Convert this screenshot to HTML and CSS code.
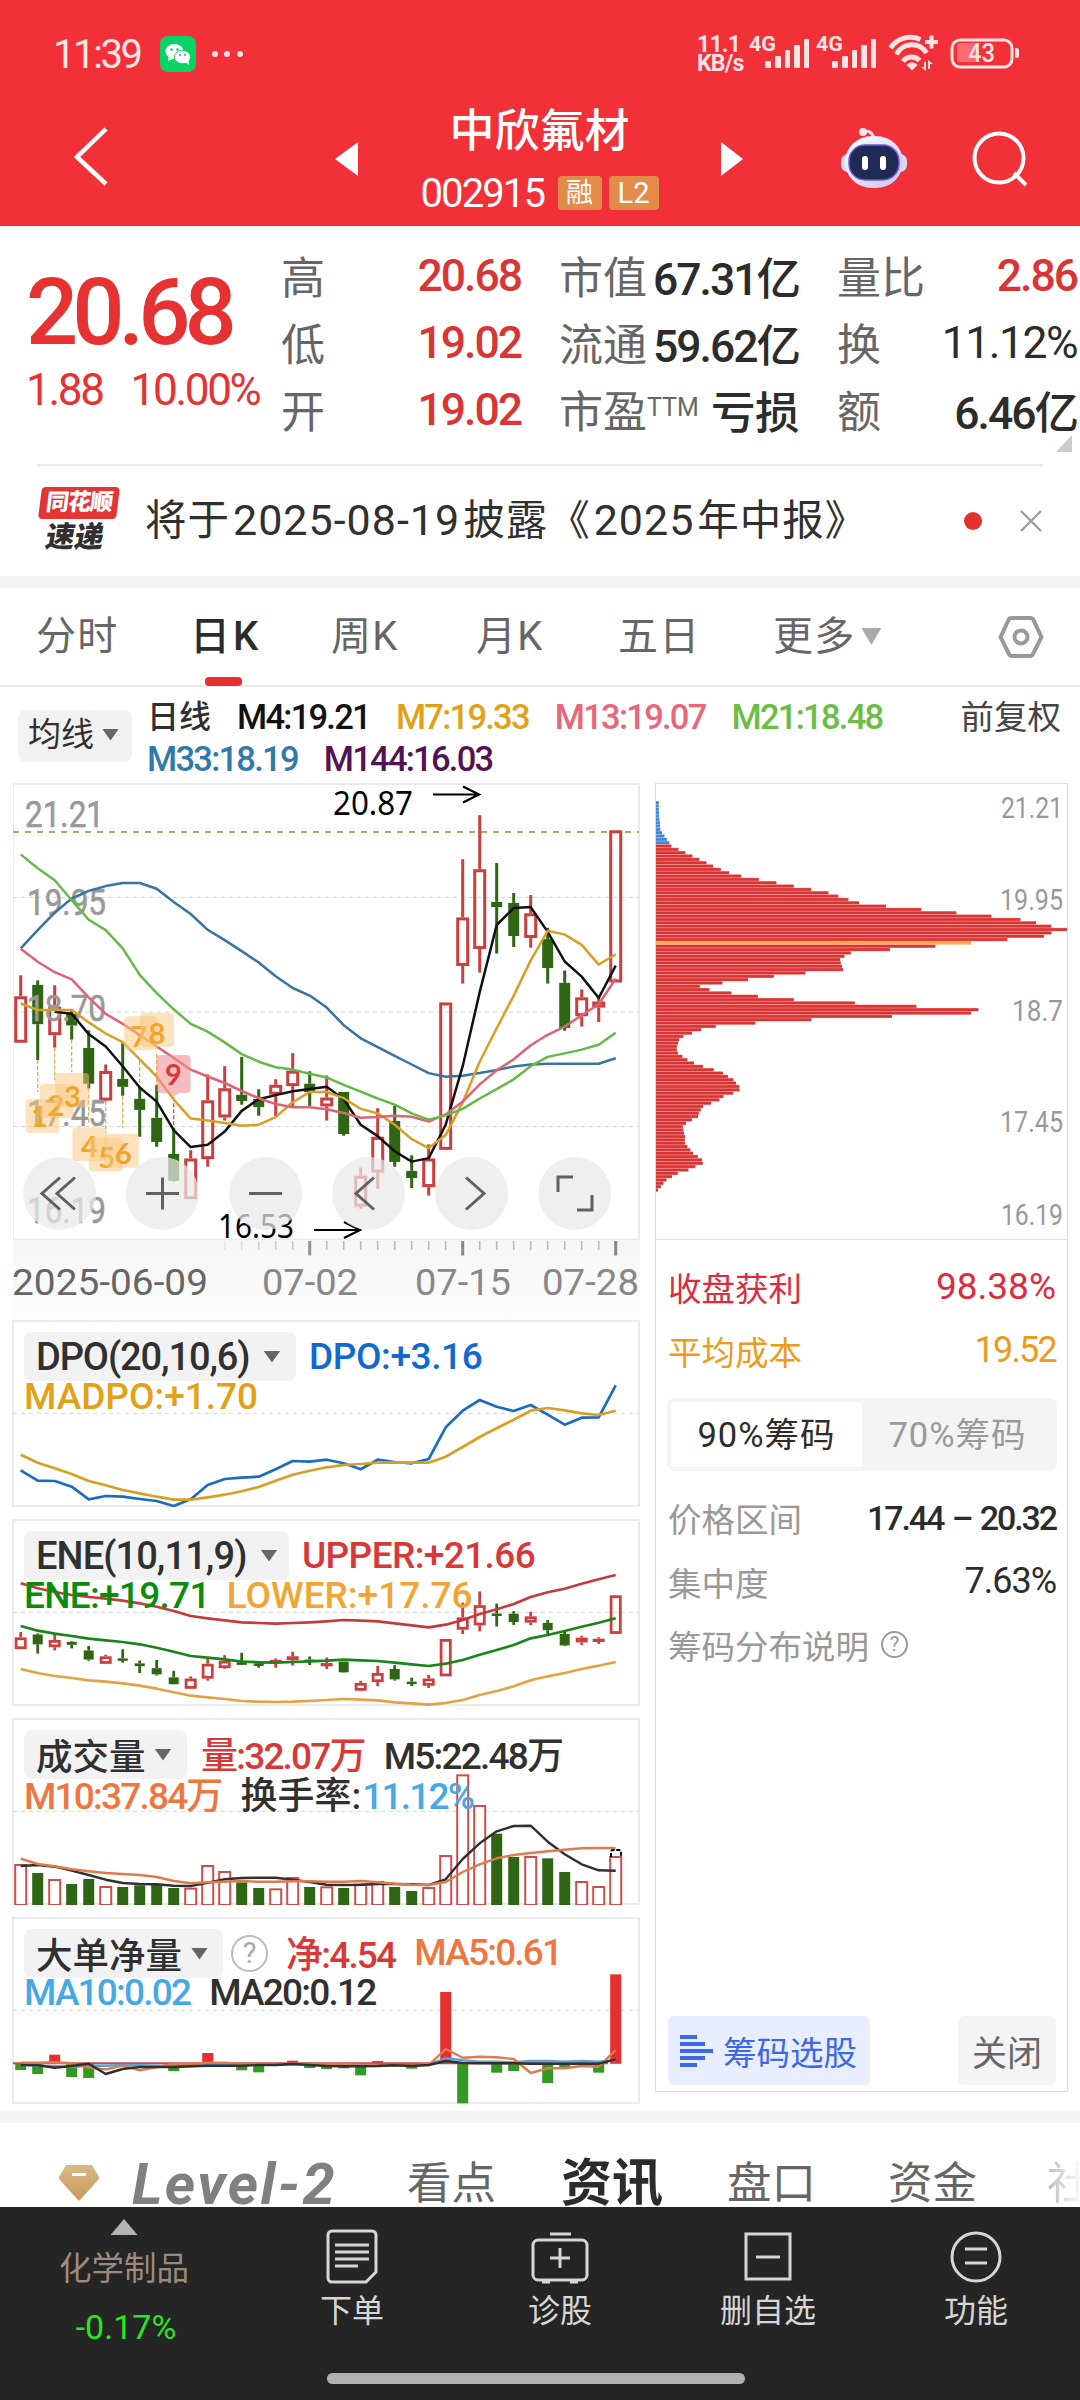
FILE: index.html
```html
<!DOCTYPE html>
<html lang="zh-CN">
<head>
<meta charset="utf-8">
<title>中欣氟材 002915</title>
<link rel="stylesheet" href="styles.css">
</head>
<body>
<div class="app">
<header class="top">
  <div class="status">
    <span class="clock">11:39</span>
    <svg class="wechat" width="36" height="36" viewBox="0 0 36 36"><rect width="36" height="36" rx="8" fill="#08d465"/><ellipse cx="14.500" cy="15.500" rx="9" ry="7.500" fill="#fff"/><path d="M9 20l-1 5 5-2z" fill="#fff"/><ellipse cx="22.500" cy="21" rx="8" ry="6.800" fill="#fff" stroke="#08d465" stroke-width="1"/><path d="M25 26l4 3-.5-5z" fill="#fff"/><g fill="#08d465"><circle cx="11.500" cy="13.500" r="1.300"/><circle cx="17.500" cy="13.500" r="1.300"/><circle cx="20" cy="19" r="1.100"/><circle cx="25" cy="19" r="1.100"/></g></svg>
    <svg class="dots" width="34" height="8" viewBox="0 0 34 8" fill="#ffe0e0"><circle cx="3" cy="4" r="3"/><circle cx="15" cy="4" r="3"/><circle cx="28" cy="4" r="3"/></svg>
    <div class="rate"><span>11.1</span><span>KB/s</span></div>
    <svg class="signals" width="330" height="44" viewBox="745 33 330 44" fill="#ffe3e4">
      <g id="sig"><text x="748" y="52" class="g4" textLength="27" lengthAdjust="spacingAndGlyphs">4G</text><rect x="764" y="62" width="6" height="7" rx="1"/><rect x="774" y="57" width="6" height="12" rx="1"/><rect x="784" y="51" width="5" height="18" rx="1"/><rect x="793" y="46" width="6" height="23" rx="1"/><rect x="803" y="40" width="5" height="29" rx="1"/></g>
      <use href="#sig" x="67"/>
      <g fill="none" stroke="#ffe3e4" stroke-width="5"><path d="M889.500 49a24 24 0 0 1 30-8.500"/><path d="M895.500 55.500a17 17 0 0 1 30-1.500"/><path d="M902 62.500a10.500 10.500 0 0 1 16.500-1"/><path d="M924 43h13M930.500 36.500v13" stroke-width="4"/></g>
      <path d="M905.500 66a7 7 0 0 1 11 0l-5.500 5.500z"/><path d="M920 68h3v-5h2v9zM932 65h-3v5h-2v-9z"/>
      <rect x="951" y="41" width="60" height="27" rx="8" fill="none" stroke="#ffe3e4" stroke-width="3"/><path d="M959 44h17v19h-17a3 3 0 0 1-3-3v-13a3 3 0 0 1 3-3z" fill="#ff6b70"/><path d="M1014 49h2q2 0 2 2v6q0 2-2 2h-2z"/><text x="967" y="63" class="batt" textLength="27" lengthAdjust="spacingAndGlyphs">43</text>
    </svg>
  </div>
  <div class="titlebar">
    <svg class="back" width="40" height="64" viewBox="0 0 40 64" fill="none" stroke="#fff" stroke-width="4.500"><path d="M33 4L4 32l29 27"/></svg>
    <svg class="prev" width="24" height="36" viewBox="0 0 24 36"><path d="M23 1v34L0 18z" fill="#fff"/></svg>
    <div class="stock">
      <h1>中欣氟材</h1>
      <div class="code"><span class="din">002915</span><i class="tag">融</i><i class="tag l2">L2</i></div>
    </div>
    <svg class="next" width="24" height="36" viewBox="0 0 24 36"><path d="M1 1v34l22-17z" fill="#fff"/></svg>
    <svg class="robot" width="70" height="66" viewBox="0 0 70 66"><defs><linearGradient id="rb" x1="0" y1="0" x2="1" y2="1"><stop offset="0" stop-color="#fff"/><stop offset="1" stop-color="#c9c4f5"/></linearGradient></defs><path d="M24 6q9-1 11 7" fill="none" stroke="#ffd9e4" stroke-width="3"/><circle cx="24" cy="7" r="4" fill="#ffe6ee"/><rect x="2" y="29" width="66" height="18" rx="7" fill="#d9d8f8"/><rect x="6" y="11" width="58" height="52" rx="27" fill="url(#rb)"/><rect x="10" y="20" width="50" height="35" rx="16" fill="#1f2b55" stroke="#7a58dd" stroke-width="1.500"/><rect x="23" y="31" width="6" height="14" rx="3" fill="#fff"/><rect x="41" y="31" width="6" height="14" rx="3" fill="#fff"/></svg>
    <svg class="search" width="60" height="60" viewBox="0 0 60 60" fill="none" stroke="#fff" stroke-width="4"><circle cx="28" cy="28" r="24.500"/><path d="M43 43l12 12"/></svg>
  </div>
</header>

<section class="quote">
  <div class="price"><b class="din">20.68</b><p><span class="din">1.88</span><span class="din">10.00%</span></p></div>
  <dl>
    <div><dt>高</dt><dd class="up">20.68</dd></div><div><dt>市值</dt><dd>67.31亿</dd></div><div><dt>量比</dt><dd class="up">2.86</dd></div>
    <div><dt>低</dt><dd class="up">19.02</dd></div><div><dt>流通</dt><dd>59.62亿</dd></div><div><dt>换</dt><dd class="rate-of">11.12%</dd></div>
    <div><dt>开</dt><dd class="up">19.02</dd></div><div><dt>市盈<sup>TTM</sup></dt><dd class="loss">亏损</dd></div><div><dt>额</dt><dd>6.46亿</dd></div>
  </dl>
  <i class="corner"></i>
</section>

<section class="notice">
  <div class="logo"><b>同花顺</b><em>速递</em></div>
  <p>将于<span class="din">2025-08-19</span>披露《<span class="din">2025</span>年中报》</p>
  <i class="reddot"></i>
  <svg width="22" height="22" viewBox="0 0 22 22" fill="none" stroke="#999" stroke-width="2.200"><path d="M1 1l20 20M21 1L1 21"/></svg>
</section>

<nav class="periods">
  <span>分时</span><span class="on">日K</span><span>周K</span><span>月K</span><span>五日</span><span class="more">更多<i></i></span>
  <svg width="46" height="44" viewBox="0 0 46 44" fill="none" stroke="#999" stroke-width="4"><path d="M13 3h20q1 0 2 1l8 17q1 1 0 2l-8 16q-1 2-2 2h-20q-1 0-2-2l-8-16q-1-1 0-2l8-17q1-1 2-1z"/><circle cx="23" cy="22" r="6.500"/></svg>
</nav>

<section class="averages">
  <button class="pick">均线<i></i></button>
  <div class="values">
    <p><strong>日线</strong><span class="m4">M4:19.21</span><span class="m7">M7:19.33</span><span class="m13">M13:19.07</span><span class="m21">M21:18.48</span></p>
    <p><span class="m33">M33:18.19</span><span class="m144">M144:16.03</span></p>
  </div>
  <span class="adj">前复权</span>
</section>

<main class="board">
  <div class="left">
    <svg id="kline" class="kline" width="627" height="457" viewBox="13 783 627 457"></svg>
    <svg id="dates" class="dates" width="627" height="80" viewBox="13 1240 627 80"></svg>
    <article class="ind">
      <svg class="plot" id="dpo" viewBox="12 1320 628 187"></svg>
      <div class="legend"><p><button class="pick din p1">DPO(20,10,6)<i></i></button><span class="c-blue">DPO:+3.16</span></p><p><span class="c-gold madpo">MADPO:+1.70</span></p></div>
    </article>
    <article class="ind">
      <svg class="plot" id="ene" viewBox="12 1519 628 187"></svg>
      <div class="legend"><p><button class="pick din p2">ENE(10,11,9)<i></i></button><span class="c-red upper">UPPER:+21.66</span></p><p><span class="c-green mid">ENE:+19.71</span><span class="c-amber lower">LOWER:+17.76</span></p></div>
    </article>
    <article class="ind">
      <svg class="plot" id="vol" viewBox="12 1718 628 187"></svg>
      <div class="legend tight"><p><button class="pick p3">成交量<i></i></button><span class="c-red">量:32.07万</span><span class="c-dark">M5:22.48万</span></p><p><span class="c-orange">M10:37.84万</span><span class="c-dark turn">换手率:<u>11.12%</u></span></p></div>
    </article>
    <article class="ind">
      <svg class="plot" id="net" viewBox="12 1917 628 187"></svg>
      <div class="legend tight"><p><button class="pick p4">大单净量<i></i></button><i class="help big">?</i><span class="c-red">净:4.54</span><span class="c-orange">MA5:0.61</span></p><p><span class="c-sky">MA10:0.02</span><span class="c-dark">MA20:0.12</span></p></div>
    </article>
  </div>

  <aside class="chips">
    <svg id="chips" width="411" height="455" viewBox="656 784 411 455"></svg>
    <div class="facts">
      <p class="profit"><span>收盘获利</span><b>98.38%</b></p>
      <p class="cost"><span>平均成本</span><b>19.52</b></p>
      <div class="seg"><span class="on">90%筹码</span><span>70%筹码</span></div>
      <p><span>价格区间</span><b class="range">17.44 – 20.32</b></p>
      <p><span>集中度</span><b class="focus">7.63%</b></p>
      <p class="about"><span>筹码分布说明</span><i class="help">?</i></p>
    </div>
    <div class="acts">
      <button class="choose"><svg width="34" height="34" viewBox="0 0 34 34" fill="#3d68e8"><path d="M0 1h17v4H0zM0 8h25v4H0zM0 15h33v4H0zM0 22h25v4H0zM0 29h17v4H0z"/></svg>筹码选股</button>
      <button class="close">关闭</button>
    </div>
  </aside>
</main>

<nav class="sections">
  <svg class="gem" width="44" height="40" viewBox="0 0 44 40"><defs><linearGradient id="gm" x1="0" y1="0" x2="0" y2="1"><stop offset="0" stop-color="#d9b98a"/><stop offset="1" stop-color="#c99a55"/></linearGradient></defs><path d="M9 2h26l7 12q0 2-1 3L23 37q-1 1-2 0L3 17q-1-1-1-3z" fill="url(#gm)"/><rect x="15" y="10" width="14" height="3" fill="#fff"/></svg>
  <span class="lv">Level-2</span><span>看点</span><span class="on">资讯</span><span>盘口</span><span>资金</span><span class="fade">社</span>
</nav>

<footer class="bar">
  <div class="sector"><i></i><span>化学制品</span><b>-0.17%</b></div>
  <div class="item"><svg width="56" height="56" viewBox="0 0 56 56"><path d="M8 2h40a4 4 0 0 1 4 4v37l-10 10H8a4 4 0 0 1-4-4V6a4 4 0 0 1 4-4zM11 16h34M11 23h34M11 30h34M11 37h23"/></svg><span>下单</span></div>
  <div class="item"><svg width="60" height="56" viewBox="0 0 60 56"><rect x="3" y="11" width="54" height="40" rx="5"/><path d="M20 5h21M20 29h20M30 19v20M12 53h8M40 53h8"/></svg><span>诊股</span></div>
  <div class="item"><svg width="56" height="56" viewBox="0 0 56 56"><path d="M6 5h44v45H6zM16 28h24"/></svg><span>删自选</span></div>
  <div class="item"><svg width="56" height="56" viewBox="0 0 56 56"><circle cx="28" cy="28" r="24"/><path d="M17 20h22M17 34h22"/></svg><span>功能</span></div>
  <i class="home"></i>
</footer>
</div>
<script src="charts.js"></script>
</body>
</html>
```
FILE: styles.css
```css
* { box-sizing: border-box; margin: 0; padding: 0; }
body { background: #fff; font-family: Roboto, "Noto Sans CJK SC", sans-serif; color: #303030; }
svg { display: block; flex: none; }
i, em { font-style: normal; }
button { border: 0; font: inherit; color: inherit; }
.app { width: 1080px; height: 2400px; overflow: hidden; display: flex; flex-direction: column; }
.app > * { flex: none; }
.din { font-family: Roboto, sans-serif; }
p, span, dt, dd, button { white-space: nowrap; }

.top { height: 226px; background: #f23038; color: #fff; }
.status { height: 96px; padding: 12px 0 0 53px; display: flex; align-items: center; }
.clock { width: 107px; font-size: 40px; letter-spacing: -2.4px; color: #ffe6e6; }
.dots { margin-left: 16px; }
.rate { margin-left: 451px; width: 49px; display: flex; flex-direction: column; font-size: 23px; line-height: 19px; font-weight: 700; color: #ffe3e4; letter-spacing: -.8px; }
.signals text { font-family: Roboto, sans-serif; }
.g4 { font-size: 21px; font-weight: 700; }
.batt { font-size: 25px; font-weight: 500; }
.titlebar { height: 130px; display: flex; align-items: flex-start; padding-left: 73px; }
.back { margin-top: 29px; }
.prev { margin: 45px 0 0 222px; }
.stock { width: 361px; display: flex; flex-direction: column; align-items: center; }
.stock h1 { font-size: 45px; line-height: 60px; font-weight: 500; margin-top: 6px; }
.code { height: 36px; margin-top: 13px; display: flex; align-items: center; }
.code .din { width: 137px; font-size: 40px; letter-spacing: -1.9px; }
.tag { width: 44px; height: 34px; border-radius: 4px; background: #e38c4a; font-size: 27px; line-height: 34px; text-align: center; }
.tag.l2 { width: 50px; margin-left: 7px; font-size: 29px; }
.next { margin-top: 45px; }
.robot { margin: 29px 0 0 95px; }
.search { margin: 34px 0 0 62px; }

.quote { height: 240px; position: relative; display: flex; padding-left: 26px; }
.quote::after { content: ""; position: absolute; left: 37px; right: 37px; bottom: 0; height: 2px; background: #ececec; }
.price { width: 255px; color: #e63232; }
.price b { display: block; margin-top: 39px; font-size: 92px; line-height: 96px; font-weight: 500; letter-spacing: -6px; }
.price p { display: flex; gap: 28px; font-size: 44px; line-height: 50px; margin-top: 4px; letter-spacing: -2.3px; }
.quote dl { flex: 1; display: grid; grid-template-columns: 241px 241px 241px; column-gap: 37px; grid-auto-rows: 67px; padding-top: 15px; }
.quote dl > div { display: flex; justify-content: space-between; align-items: center; }
.quote dt { font-size: 44px; color: #666; }
.quote dd { font-size: 44.5px; font-weight: 500; color: #2c2c2c; letter-spacing: -2px; margin: 2px 1px 0 0; }
.quote dd.up { color: #d93535; letter-spacing: -2px; }
.quote dd.rate-of { letter-spacing: -1.5px; font-weight: 400; }
.quote dd.loss { letter-spacing: -.5px; }
.quote sup { font-size: 25px; vertical-align: 12px; }
.corner { position: absolute; left: 1056px; top: 209px; width: 16px; height: 17px; background: #ccc; clip-path: polygon(100% 0, 100% 100%, 0 100%); }

.notice { height: 110px; padding-left: 38px; display: flex; align-items: center; }
.logo { width: 107px; height: 68px; display: flex; flex-direction: column; align-items: flex-start; }
.logo b { width: 78px; height: 34px; margin-left: 2px; transform: skewX(-7deg); border-radius: 4px; background: #e43535; color: #fff; font-size: 23px; line-height: 32px; text-align: center; font-weight: 900; letter-spacing: -1px; }
.logo em { margin-left: 8px; transform: skewX(-10deg); font-size: 29px; line-height: 36px; font-weight: 900; }
.notice p { width: 819px; font-size: 41.500px; line-height: 50px; margin-top: -1px; letter-spacing: 1px; }
.notice p .din { font-size: 43px; margin: 0 3px; }
.reddot { width: 18px; height: 18px; border-radius: 50%; background: #e63030; margin-right: 38px; }

.periods { height: 111px; border-top: 12px solid #f4f4f4; border-bottom: 2px solid #e9e9e9; padding: 0 36px; display: grid; grid-template-columns: 156px 139px 145px 142px 155px 1fr auto; align-items: center; font-size: 40px; line-height: 50px; color: #666; letter-spacing: 1.2px; }
.periods .on { position: relative; left: -2px; font-weight: 500; color: #2c2c2c; letter-spacing: 3px; }
.periods .on::after { content: ""; position: absolute; left: 15px; bottom: -24px; width: 37px; height: 9px; border-radius: 4px; background: #e63030; }
.periods .more { display: flex; align-items: center; gap: 6px; }
.periods .more i { width: 20px; height: 17px; background: #aaa; clip-path: polygon(0 0, 100% 0, 50% 100%); }

.averages { height: 96px; padding: 10px 19px 0 18px; display: flex; font-size: 34.5px; line-height: 41px; }
.pick { display: flex; align-items: center; background: #f2f2f2; border-radius: 8px; color: #303030; }
.pick i { width: 17px; height: 12px; background: #666; clip-path: polygon(0 0, 100% 0, 50% 100%); }
.averages .pick { width: 114px; height: 52px; margin: 13px 15px 0 0; padding: 0 0 3px 10px; gap: 8px; font-size: 33px; }
.averages p { display: flex; gap: 26px; letter-spacing: -1.75px; }
.averages p + p { padding-top: 1px; }
.averages strong { font-size: 32px; font-weight: 500; letter-spacing: 0; }
.values { font-weight: 500; }
.adj { margin-left: auto; font-size: 33.5px; color: #444; }
.m4 { color: #111; } .m7 { color: #e2a116; } .m13 { color: #e8677a; } .m21 { color: #6cbd45; } .m33 { color: #3079ab; } .m144 { color: #521254; }

.board { height: 1328px; padding-left: 12px; display: flex; gap: 15px; }
.left { width: 628px; display: flex; flex-direction: column; }
.kline, .dates { margin-left: 1px; }
.ind { flex: none; height: 187px; margin-bottom: 12px; position: relative; border: 2px solid #ebebeb; }
.plot { position: absolute; left: -2px; top: -2px; width: 628px; height: 187px; }
.legend { position: relative; padding: 10px 0 0 10px; font-size: 37px; letter-spacing: -.4px; }
.legend p { display: flex; align-items: center; height: 49px; font-weight: 500; }
.legend p + p { height: 31px; padding-left: 0; gap: 17px; }
.legend.tight { letter-spacing: -1.8px; }
.legend.tight p > span { margin-top: -3px; }
.legend .pick { height: 49px; width: 272px; padding-left: 12px; margin-right: 13px; gap: 14px; font-size: 38px; font-weight: 500; letter-spacing: -1.1px; }
.legend .p2 { width: 265px; letter-spacing: -.9px; }
.legend .p3 { width: 163px; font-size: 36.500px; gap: 9px; margin-right: 14px; letter-spacing: 0; }
.legend .p4 { width: 199px; font-size: 36.500px; gap: 9px; margin-right: 8px; letter-spacing: 0; }
.legend p > span + span { margin-left: 19px; }
.legend p + p > span + span { margin-left: 0; }
.legend .madpo { letter-spacing: 0; }
.legend .upper { letter-spacing: -.6px; }
.legend .mid { letter-spacing: -.7px; }
.legend .lower { letter-spacing: 0; }
.legend.tight p + p { gap: 19px; }
.legend .turn { letter-spacing: 0; }
.legend u { text-decoration: none; color: #46a8e4; letter-spacing: -1.8px; margin-left: 1px; }
.c-blue { color: #1169d0; } .c-gold { color: #e2a116; } .c-red { color: #d93838; } .c-green { color: #0c8c0c; } .c-amber { color: #f2a533; } .c-dark { color: #303030; } .c-orange { color: #f0763f; } .c-sky { color: #46a8e4; }
.help { width: 27px; height: 27px; border: 2px solid #999; border-radius: 50%; color: #999; font-size: 20px; line-height: 23px; text-align: center; }
.help.big { width: 37px; height: 37px; border-color: #bbb; color: #aaa; font-size: 29px; line-height: 33px; margin-right: 18px; font-weight: 400; letter-spacing: 0; }

.chips { width: 413px; height: 1309px; border: 1px solid #ddd; display: flex; flex-direction: column; }
.facts { border-top: 1px solid #ddd; padding: 15px 11px 0 12px; font-size: 33.5px; flex: 1; color: #999; }
.facts p { display: flex; justify-content: space-between; align-items: center; height: 63.5px; }
.facts b { font-weight: 400; font-size: 37px; color: #2c2c2c; }
.facts .range { font-size: 34px; font-weight: 500; letter-spacing: -2.1px; word-spacing: 2px; }
.facts .focus { font-size: 36px; letter-spacing: -1px; }
.facts .profit, .facts .profit b { color: #dd2c40; }
.facts .cost, .facts .cost b { color: #ee9b1c; }
.facts .cost b { font-size: 36px; letter-spacing: -1.8px; }
.seg { height: 73px; margin: 16px -1px 15px; padding: 4px; border-radius: 8px; background: #f4f4f4; display: flex; }
.seg span { flex: 1; text-align: center; line-height: 66px; font-size: 34.500px; letter-spacing: 1px; border-radius: 4px; }
.seg .on { background: #fff; color: #2c2c2c; }
.facts .about { justify-content: flex-start; gap: 12px; }
.acts { height: 75px; padding: 0 11px 6px 12px; display: flex; justify-content: space-between; }
.choose { width: 202px; display: flex; align-items: center; gap: 9px; padding-left: 12px; border-radius: 6px; background: #e8eeff; color: #3d68e8; font-size: 33.5px; }
.close { width: 98px; border-radius: 6px; background: #f4f4f4; color: #666; font-size: 35px; }

.sections { height: 96px; border-top: 12px solid #f4f4f4; display: flex; align-items: center; padding: 37px 0 0 57px; overflow: hidden; font-size: 44.5px; color: #666; }
.sections > span { flex: none; line-height: 66px; }
.sections > .gem { margin-top: -1px; }
.sections .lv { width: 274px; margin-left: 31px; font: italic 700 58px/60px Roboto, sans-serif; letter-spacing: 2.4px; color: #808080; }
.sections .lv + span { margin-left: 1px; }
.sections .on { font-size: 51px; font-weight: 700; color: #2c2c2c; margin: 0 64px 0 65px; }
.sections .on + span { margin-right: 72px; }
.sections .fade { margin-left: 70px; background: linear-gradient(90deg, #bbb, #fff 36px); background-clip: text; color: transparent; }

.bar { height: 193px; background: #252525; position: relative; display: flex; color: #d6d6d6; font-size: 32px; }
.sector { width: 248px; display: flex; flex-direction: column; align-items: center; padding-top: 12px; color: #9b8b7f; font-size: 32.5px; }
.sector i { width: 27px; height: 16px; background: #b3b3b3; clip-path: polygon(50% 0, 100% 100%, 0 100%); }
.sector span { line-height: 46px; margin-top: 11px; }
.sector b { font-weight: 400; color: #23e823; font-size: 34px; line-height: 50px; margin: 10px 0 0 4px; }
.item { width: 208px; padding-top: 22px; display: flex; flex-direction: column; align-items: center; }
.item svg { fill: none; stroke: #d6d6d6; stroke-width: 3; }
.item span { line-height: 46px; margin-top: 3px; }
.home { position: absolute; left: 327px; top: 166px; width: 418px; height: 11px; border-radius: 6px; background: #b1b1b1; }

.grid { stroke: #d6d6d6; stroke-width: 1; stroke-dasharray: 4 4; }
.axis { font-family: Roboto, sans-serif; fill: #999; }
```
FILE: charts.js
```js
const X = i => 20.7 + 17 * i;
const RED = '#cc3f3f', GREEN = '#2f6613';

const add = (id, markup) => { document.getElementById(id).innerHTML += markup; };
const line = (vals, base, color, { w = 2.7, start = 0, unit = 3 } = {}) =>
  `<polyline fill="none" stroke="${color}" stroke-width="${w}" stroke-linejoin="round" points="${vals.map((v, i) => X(i + start).toFixed(1) + ',' + (base + v / unit).toFixed(1)).join(' ')}"/>`;
const seg = (x1, y1, x2, y2, attrs) => `<line x1="${x1}" y1="${y1}" x2="${x2}" y2="${y2}" ${attrs}/>`;
const grid = y => seg(13, y, 639, y, 'class="grid"');
const label = (t, x, y, w, size, attrs = '') =>
  `<text class="axis" x="${x}" y="${y}" font-size="${size}" textLength="${w}" lengthAdjust="spacingAndGlyphs" ${attrs}>${t}</text>`;

const candles = [
  ['r',596,657,792,792],['g',611,624,738,842],['r',625,687,770,806],['g',700,708,742,783],['g',756,807,911,925],['r',855,874,960,962],
  ['g',793,897,920,946],['g',922,955,987,1065],['g',915,1010,1080,1094],['g',1040,1115,1193,1195],['r',1104,1128,1246,1246],['r',884,959,1130,1152],
  ['r',860,924,1009,1018],['g',833,943,961,972],['g',927,955,979,1004],['r',898,914,943,1005],['r',822,873,918,980],['g',875,911,935,975],
  ['r',887,951,977,1018],['g',935,935,1057,1062],['r',1154,1178,1268,1274],['r',982,1065,1169,1216],['g',975,1019,1138,1152],['g',1119,1164,1185,1214],
  ['r',1087,1128,1211,1236],['r',677,675,1103,1101],['r',259,428,569,620],['r',131,288,520,588],['g',270,383,398,533],['g',357,386,482,514],
  ['r',363,416,488,516],['g',458,491,575,620],['g',582,618,749,757],['r',637,660,715,745],['r',655,672,690,732],['r',178,175,617,614]
];
function drawCandles(map, w) {
  const k = w / 4.3;
  return candles.map(([c, hi, top, bot, lo], i) => {
    const x = X(i), [h, t, b, l] = [hi, top, bot, lo].map(map);
    const col = c === 'r' ? RED : GREEN;
    let s = seg(x, h, x, Math.max(t, h), `stroke="${col}" stroke-width="${k}"`) + seg(x, b, x, Math.max(b, l), `stroke="${col}" stroke-width="${k}"`);
    if (c === 'r') {
      s += `<rect x="${x - w / 2 + k / 2}" y="${t + k / 2}" width="${w - k}" height="${Math.max(b - t - k, .5)}" fill="none" stroke="${col}" stroke-width="${k}"/>`;
    } else s += `<rect x="${x - w / 2 + 1}" y="${t}" width="${w - 2}" height="${Math.max(b - t, 2.5)}" fill="${col}"/>`;
    return s;
  }).join('');
}

// Daily candles
(function () {
  const B = 770, U = 2.9037, y = v => B + v / U;
  const avg = (vals, color, start = 0) => line(vals, B, color, { w: 2.5, start, unit: U });
  let s = '<rect x="13" y="784" width="626" height="455.500" fill="#fff" stroke="#ebebeb" stroke-width="2"/>';
  [370, 703, 1035].forEach(v => { s += grid(y(v)); });
  s += seg(13, y(180), 639, y(180), 'stroke="#b8a36d" stroke-width="2" stroke-dasharray="6 6"');
  s += drawCandles(y, 13);
  [['21.21',827,25],['19.95',915,27],['18.70',1020.5,27],['17.45',1126,27],['16.19',1223,27]].forEach(([t, yy, x]) => { s += label(t, x, yy, 79, 36, 'stroke="#999" stroke-width=".6"'); });
  [[1,842,935],[2,806,900],[3,783,878],[4,925,1025],[5,962,1055],[6,946,1040],[7,845,922],[8,825,915],[9,950,1040]].forEach(([i, a, b]) => {
    s += seg(X(i), y(a), X(i), y(b), `stroke="${i === 9 ? '#cc3f3f' : '#e0a73a'}" stroke-width="1.2" stroke-dasharray="4 2"`);
  });
  s += avg([518,465,414,373,351,337,328,328,345,383,418,464,494,526,559,599,633,655,690,741,779,805,830,855,880,891,888,880,871,861,855,853,853,853,853,837], '#37749f');
  s += avg([702,708,767,803,860,922,963,1046,1095,1088,1050,990,956,944,933,926,920,956,1030,1063,1107,1137,1127,1030,860,645,450,401,398,470,556,600,662,568], '#111', 2);
  s += avg([678,697,697,697,733,765,790,840,890,957,1012,1018,1025,1033,1030,1008,965,935,935,953,984,997,1030,1072,1098,1060,965,847,750,655,553,467,478,508,565,535], '#d99f25');
  s += avg([519,557,587,608,660,708,737,770,803,836,870,890,909,932,953,970,979,979,985,996,1010,1008,1004,1007,1021,1000,963,913,872,840,799,769,745,712,680,606], '#dd6377');
  s += avg([245,285,320,378,435,465,518,595,648,695,737,760,791,825,847,863,870,882,893,914,934,954,972,997,1015,1003,984,954,927,898,860,833,823,812,798,763], '#68b848');
  // Nine-turn counters: text, text centre, box centre, box top, baseline
  [['1',118,128,955,1038],['2',168,170,912,1006],['3',217,216,880,978],['4',268,268,1037,1125],['5',320,318,1067,1156],['6',370,365,1056,1145],['7',417,423,715,805],['8',471,471,705,795]].forEach(([t, tx, cx, top, ty]) => {
    s += `<g transform="translate(${cx / 3} ${y(top)})"><path d="M-13 0h26q4 0 4 4v26q0 4-4 4h-26q-4 0-4-4v-26q0-4 4-4z" fill="#fbc77c" opacity=".5"/></g>`;
    s += `<text x="${tx / 3}" y="${y(ty)}" font-size="29" font-weight="700" fill="#f5a32b" text-anchor="middle" font-family="Lato, sans-serif">${t}</text>`;
  });
  s += `<g transform="translate(173.5 1055)"><path d="M-13 0h26q4 0 4 4v30q0 4-4 4h-8l-5 4-5-4h-8q-4 0-4-4v-30q0-4 4-4z" fill="#f28f95" opacity=".6"/></g><text x="173.500" y="${y(916)}" font-size="29" font-weight="700" fill="#d63a3a" text-anchor="middle" font-family="Lato, sans-serif">9</text>`;
  const peak = (t, x, yy, w, ax, ay) => `<text x="${x}" y="${yy}" font-size="32" fill="#000" font-family="Noto Sans, sans-serif" textLength="${w}" lengthAdjust="spacingAndGlyphs">${t}</text><path d="M${ax} ${ay}h46m-16-8l16 8-16 8" fill="none" stroke="#000" stroke-width="2.200"/>`;
  s += peak('20.87', 333, 815, 80, 433, 794.5) + peak('16.53', 218, 1237.5, 76, 314, 1230);
  [59.7,162.3,265.7,368.5,471.7,574.7].forEach(x => { s += `<circle cx="${x}" cy="1193.500" r="36.500" fill="#e9e9e9" fill-opacity=".72"/>`; });
  s += '<g transform="translate(0 13.5)"><path d="M60 1164l-18 16 18 16M75 1164l-18 16 18 16M146 1180h33M162.500 1164v32M249 1180h33M374 1164l-18 16 18 16M466 1164l18 16-18 16M573 1163.500h-15v15M577 1196.500h15v-15" fill="none" stroke="#606060" stroke-width="3"/></g>';
  add('kline', s);
})();

// Date ruler
(function () {
  let s = '<defs><linearGradient id="floor" x1="0" y1="0" x2="0" y2="1"><stop offset="0" stop-color="#f6f6f6"/><stop offset="1" stop-color="#fdfdfd"/></linearGradient></defs><rect x="13" y="1240" width="627" height="80" fill="url(#floor)"/>';
  for (let i = 12; i < 36; i++) {
    const big = i === 17 || i === 26 || i === 35;
    s += seg(X(i), 1241, X(i), big ? 1255.5 : 1250, `stroke="${big ? '#888' : '#bbb'}" stroke-width="${big ? 3 : 1.6}" opacity="${Math.min(1, .3 + (i - 12) * .12)}"`);
  }
  s += label('2025-06-09', 12, 1295, 196, 36, 'style="fill:#666"') + label('07-02', 262, 1295, 96, 36, 'style="fill:#888"') + label('07-15', 415, 1295, 96, 36, 'style="fill:#888"') + label('07-28', 542, 1295, 97, 36, 'style="fill:#888"');
  add('dates', s);
})();

// DPO
add('dpo', grid(1413.3)
  + line([481,512,513,530,568,558,560,567,573,588,568,525,507,503,500,478,453,455,449,460,478,449,456,460,447,352,302,270,290,303,285,314,344,323,322,226], 1310, '#1b6cc0')
  + line([434,458,475,492,513,526,540,550,560,569,569,562,554,544,531,512,494,482,472,465,462,458,457,458,458,440,411,381,355,329,302,294,301,310,315,302], 1310, '#d99f25'));

// ENE envelope
add('ene', grid(1612.3)
  + drawCandles(v => 1310 + (.262 * v + 810) / 3, 12)
  + line([820,835,846,855,861,866,872,880,890,903,918,925,931,937,939,941,939,937,934,930,932,934,940,946,952,944,930,912,898,882,861,847,836,821,808,795], 1310, '#c23c3c')
  + line([948,962,971,978,986,991,996,1003,1013,1025,1038,1043,1048,1055,1057,1058,1056,1054,1052,1049,1051,1053,1058,1063,1068,1061,1050,1034,1020,1005,985,975,963,950,938,925], 1310, '#198519')
  + line([1077,1089,1098,1104,1111,1115,1120,1127,1136,1147,1157,1162,1167,1173,1175,1176,1175,1173,1170,1167,1169,1171,1177,1180,1184,1179,1170,1155,1143,1129,1111,1099,1089,1077,1067,1056], 1310, '#e2a245'));

// Volume
(function () {
  const tops = [480,504,525,537,522,546,546,541,540,549,551,483,501,532,549,553,519,546,547,549,539,531,546,558,549,453,211,303,386,456,456,460,501,531,546,456];
  const kinds = 'rgrggrggggrrrggrrgrgrrggrrrrggrggrrr';
  let s = grid(1811.3);
  tops.forEach((t, i) => {
    const y = 1705 + t / 3, h = 1905 - y, x = X(i);
    s += kinds[i] === 'r'
      ? `<rect x="${x - 5.5}" y="${y}" width="11" height="${h}" fill="#fff" stroke="#cc4f4f" stroke-width="2"/>`
      : `<rect x="${x - 5.5}" y="${y}" width="11" height="${h}" fill="${GREEN}"/>`;
  });
  s += line([483,480,485,497,510,524,534,537,538,542,543,533,523,519,518,518,524,531,539,540,539,537,537,538,540,523,462,415,379,363,362,410,448,478,496,497], 1705, '#303030', { w: 2.4 });
  s += line([461,477,484,493,499,504,507,510,516,528,535,532,530,528,530,530,529,529,530,530,528,532,536,539,540,531,501,478,460,450,444,439,434,430,429,429], 1705, '#df7a4c', { w: 2.4 });
  s += '<path d="M611 1857v-5q0-2 2-2h6q2 0 2 2v5" fill="none" stroke="#000" stroke-width="2" stroke-dasharray="4 1.500"/>';
  add('vol', s);
})();

// Net large orders
(function () {
  const bars = {0:1095,1:1107,2:1049,3:1116,4:1119,9:1098,11:1044,13:1096,14:1102,16:1067,17:1089,18:1092,19:1090,20:1111,21:1068,23:1091,25:861,26:1195,28:1103,29:1098,31:1134,32:1092,33:1066,34:1103,35:808};
  let s = grid(2010.3);
  Object.entries(bars).forEach(([i, v]) => {
    const y = 1705 + v / 3, z = 2063.8;
    s += `<rect x="${X(+i) - 5.5}" y="${Math.min(y, z)}" width="11" height="${Math.abs(y - z)}" fill="${v < 1076 ? '#e53030' : '#319a20'}"/>`;
  });
  s += seg(13, 2063.3, 608, 2063.3, 'stroke="#c94848" stroke-width="2"');
  s += line([1078,1082,1084,1086,1082,1082,1080,1081,1082,1084,1084,1080,1077,1077,1078,1078,1077,1077,1078,1078,1079,1080,1080,1080,1078,1060,1066,1070,1070,1072,1068,1068,1070,1068,1070,1066], 1705, '#5da3d6', { w: 2.4 });
  s += line([1073,1073,1072,1075,1088,1093,1082,1096,1086,1076,1077,1073,1073,1076,1077,1078,1077,1076,1077,1079,1082,1081,1081,1081,1080,1032,1058,1055,1057,1062,1104,1090,1090,1083,1085,1035], 1705, '#df7a4c', { w: 2.4 });
  s += line([1080,1081,1088,1083,1076,1107,1092,1086,1086,1086,1084,1082,1082,1082,1080,1080,1077,1080,1083,1084,1084,1083,1081,1083,1080,1068,1074,1075,1075,1075,1076,1076,1076,1076,1076,1063], 1705, '#303030', { w: 2.4 });
  add('net', s);
})();

// Chip distribution
(function () {
  const w = [8,8,8,9,9,10,11,12,13,18,25,32,40,46,67,88,109,130,151,171,194,219,256,308,361,413,465,517,547,577,609,690,796,901,1006,1093,1140,1186,1234,1186,1164,1054,945,838,702,584,565,552,554,558,561,448,353,276,199,131,160,226,306,413,596,781,967,945,708,466,298,179,135,108,82,69,66,62,62,66,79,94,114,141,173,201,216,232,240,250,250,231,202,190,165,141,134,128,126,108,90,80,82,84,87,86,87,94,103,111,125,138,140,118,97,65,48,31,22,14,6];
  let s = '';
  w.forEach((v, i) => {
    const y = 770 + (98 + i * 10.017) / 3;
    const avg = i === 42;
    s += `<rect x="656" y="${(y - 1.7).toFixed(2)}" width="${(v / 3).toFixed(1)}" height="3.340" fill="${i < 13 ? '#86b6ea' : avg ? '#ffab3d' : '#f47c7c'}"/>`;
    if (!avg) s += `<rect x="656" y="${(y - 1.25).toFixed(2)}" width="${(v / 3).toFixed(1)}" height="2.500" fill="${i < 13 ? '#3f86d8' : '#d83434'}"/>`;
  });
  [['21.21',1001,818],['19.95',1000,910],['18.7',1012,1021],['17.45',1000,1132],['16.19',1001,1225]].forEach(([t, x, y]) => { s += label(t, x, y, 1063 - x, 29.5); });
  add('chips', s);
})();
```
